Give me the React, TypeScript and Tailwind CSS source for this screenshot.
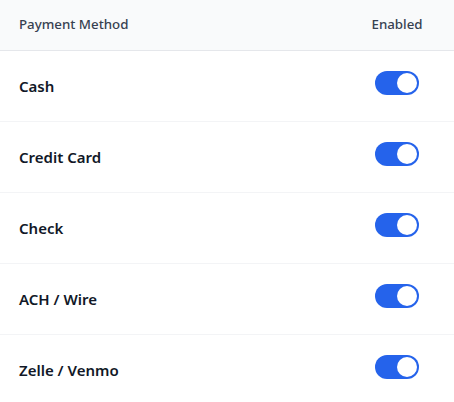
import { useState } from "react";

const methods = ["Cash", "Credit Card", "Check", "ACH / Wire", "Zelle / Venmo"];

const Toggle = ({ on, onClick }: { on: boolean; onClick: () => void }) => (
  <button
    onClick={onClick}
    className={`relative inline-flex h-6 w-11 items-center rounded-full ${
      on ? "bg-[#2563eb]" : "bg-gray-200"
    }`}
  >
    <span
      className={`inline-block h-5 w-5 rounded-full bg-white ${
        on ? "translate-x-[22px]" : "translate-x-[2px]"
      }`}
    />
  </button>
);

const App = () => {
  const [enabled, setEnabled] = useState<boolean[]>(methods.map(() => true));

  return (
    <div className="min-h-screen bg-white font-['Noto_Sans',sans-serif]">
      <div className="flex h-[51px] items-center justify-between border-b border-[#e5e7eb] bg-[#f9fafb] pl-[19px]">
        <div className="text-[13.3px] font-medium text-[#374151]">Payment Method</div>
        <div className="mr-3 w-[90px] text-center text-[13.3px] font-medium text-[#374151]">
          Enabled
        </div>
      </div>
      {methods.map((m, i) => (
        <div
          key={m}
          className="flex h-[71px] items-center justify-between border-b border-[#f3f4f6] pl-[19px]"
        >
          <div className="text-[15px] font-semibold text-[#111827]">{m}</div>
          <div className="mr-3 flex w-[90px] justify-center pb-[6px]">
            <Toggle
              on={enabled[i]}
              onClick={() =>
                setEnabled((prev) => prev.map((v, j) => (j === i ? !v : v)))
              }
            />
          </div>
        </div>
      ))}
    </div>
  );
};

export default App;
